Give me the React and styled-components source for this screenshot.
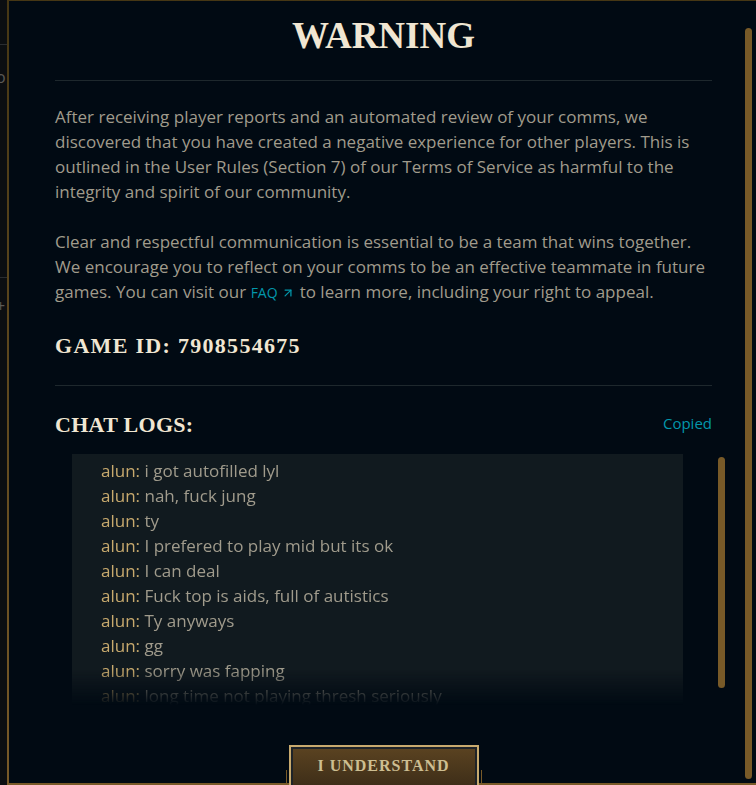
import React from "react";
import styled, { createGlobalStyle } from "styled-components";
import { ArrowUpRight } from "lucide-react";

const chat = [
  ["alun", "i got autofilled lyl"],
  ["alun", "nah, fuck jung"],
  ["alun", "ty"],
  ["alun", "I prefered to play mid but its ok"],
  ["alun", "I can deal"],
  ["alun", "Fuck top is aids, full of autistics"],
  ["alun", "Ty anyways"],
  ["alun", "gg"],
  ["alun", "sorry was fapping"],
  ["alun", "long time not playing thresh seriously"],
];

function App() {
  return (
    <>
      <GlobalStyle />
      <Page>
        <Backdrop>
          <BackRule $top={44} />
          <BackGlyph $top={22}>o</BackGlyph>
          <BackRule $top={190} />
          <BackGlyph $top={18}>+</BackGlyph>
        </Backdrop>

        <Modal>
          <Body>
            <Title>WARNING</Title>
            <Rule />

            <Text>
              After receiving player reports and an automated review of your comms, we
              discovered that you have created a negative experience for other players. This
              is outlined in the User Rules (Section 7) of our Terms of Service as harmful to
              the integrity and spirit of our community.
            </Text>
            <Text>
              Clear and respectful communication is essential to be a team that wins together.
              We encourage you to reflect on your comms to be an effective teammate in future
              games. You can visit our{" "}
              <Link>
                FAQ <ArrowUpRight size={14} strokeWidth={2.2} />
              </Link>{" "}
              to learn more, including your right to appeal.
            </Text>

            <GameId>GAME ID: 7908554675</GameId>
            <Rule $gap={25} />

            <ChatHeader>
              <Heading>CHAT LOGS:</Heading>
              <Copied>Copied</Copied>
            </ChatHeader>

            <ChatRow>
              <ChatBox>
                {chat.map(([name, msg], i) => (
                  <Line key={i}>
                    <Name>{name}:</Name> {msg}
                  </Line>
                ))}
              </ChatBox>
              <ChatThumb />
            </ChatRow>

            <Footer>
              <Tick />
              <Button>I UNDERSTAND</Button>
              <Tick />
            </Footer>
          </Body>
          <ModalThumb />
        </Modal>
      </Page>
    </>
  );
}

export default App;

const GlobalStyle = createGlobalStyle`
  html, body {
    margin: 0;
    padding: 0;
    background: #0a0d10;
    overflow: hidden;
  }
  * {
    box-sizing: border-box;
  }
`;

const Page = styled.div`
  display: flex;
  width: 756px;
  height: 785px;
`;

const Backdrop = styled.div`
  width: 7px;
  flex-shrink: 0;
  overflow: hidden;
  display: flex;
  flex-direction: column;
  background: #0b0e11;
`;

const BackRule = styled.div`
  height: 1px;
  margin-top: ${(p) => p.$top}px;
  background: #2a2d30;
  flex-shrink: 0;
`;

const BackGlyph = styled.div`
  margin-top: ${(p) => p.$top}px;
  margin-left: -4px;
  font-family: "Open Sans", sans-serif;
  font-size: 16px;
  line-height: 20px;
  color: #5b5a56;
`;

const Modal = styled.div`
  display: flex;
  width: 749px;
  height: 785px;
  background: #010a13;
  border-style: solid;
  border-width: 1px 0 2px 2px;
  border-image: linear-gradient(to bottom, #463714, #785a28) 1;
`;

const Body = styled.div`
  flex: 0 0 736px;
  display: flex;
  flex-direction: column;
  padding: 0 33px 0 46px;
  font-family: "Open Sans", sans-serif;
`;

const Title = styled.h1`
  margin: 13px 0 0;
  text-align: center;
  font-family: "Liberation Serif", serif;
  font-weight: 700;
  font-size: 37px;
  line-height: 44px;
  color: #f0e6d2;
`;

const Rule = styled.div`
  height: 1px;
  margin-top: ${(p) => p.$gap || 22}px;
  background: #1e282d;
  flex-shrink: 0;
`;

const Text = styled.p`
  margin: 23px 0 0;
  font-size: 17px;
  line-height: 25px;
  color: #a09b8c;
  & + & {
    margin-top: 25px;
  }
`;

const Link = styled.span`
  color: #0397ab;
  font-size: 14px;
  svg {
    vertical-align: -2px;
  }
`;

const GameId = styled.div`
  margin-top: 27px;
  font-family: "Liberation Serif", serif;
  font-weight: 700;
  font-size: 22px;
  line-height: 28px;
  letter-spacing: 1.3px;
  color: #f0e6d2;
`;

const ChatHeader = styled.div`
  display: flex;
  justify-content: space-between;
  align-items: center;
  margin-top: 25px;
`;

const Heading = styled.h2`
  margin: 0;
  font-family: "Liberation Serif", serif;
  font-weight: 700;
  font-size: 22px;
  line-height: 28px;
  letter-spacing: 0.3px;
  color: #f0e6d2;
`;

const Copied = styled.span`
  font-size: 15px;
  color: #0397ab;
  margin-top: -4px;
`;

const ChatRow = styled.div`
  display: flex;
  align-items: flex-start;
  margin: 15px -13px 0 17px;
`;

const ChatBox = styled.div`
  width: 611px;
  height: 251px;
  overflow: hidden;
  padding: 4px 29px 0;
  background: #111a1f;
  -webkit-mask-image: linear-gradient(to bottom, #000 calc(100% - 36px), transparent 100%);
  mask-image: linear-gradient(to bottom, #000 calc(100% - 36px), transparent 100%);
`;

const Line = styled.div`
  font-size: 17px;
  line-height: 25px;
  color: #a09b8c;
  white-space: nowrap;
`;

const Name = styled.span`
  color: #c8aa6e;
`;

const ChatThumb = styled.div`
  width: 7px;
  height: 231px;
  margin: 3px 0 0 35px;
  border-radius: 4px;
  background: #785a28;
`;

const Footer = styled.div`
  margin-top: auto;
  margin-bottom: -10px;
  display: flex;
  justify-content: center;
  align-items: flex-end;
  gap: 2px;
`;

const Tick = styled.div`
  width: 1px;
  height: 13px;
  margin-bottom: 10px;
  background: #785a28;
`;

const Button = styled.button`
  width: 190px;
  height: 48px;
  padding: 9px 0 0;
  display: flex;
  justify-content: center;
  align-items: flex-start;
  border: 2px solid #c8aa6e;
  box-shadow: inset 0 0 0 2px #1e2328;
  background: linear-gradient(to bottom, #5b4321, #3a2b17);
  font-family: "Liberation Serif", serif;
  font-weight: 700;
  font-size: 16px;
  line-height: 20px;
  letter-spacing: 1px;
  color: #cdbe91;
  cursor: pointer;
`;

const ModalThumb = styled.div`
  width: 7px;
  height: 751px;
  margin-top: 27px;
  border-radius: 4px;
  background: #785a28;
  flex-shrink: 0;
`;
